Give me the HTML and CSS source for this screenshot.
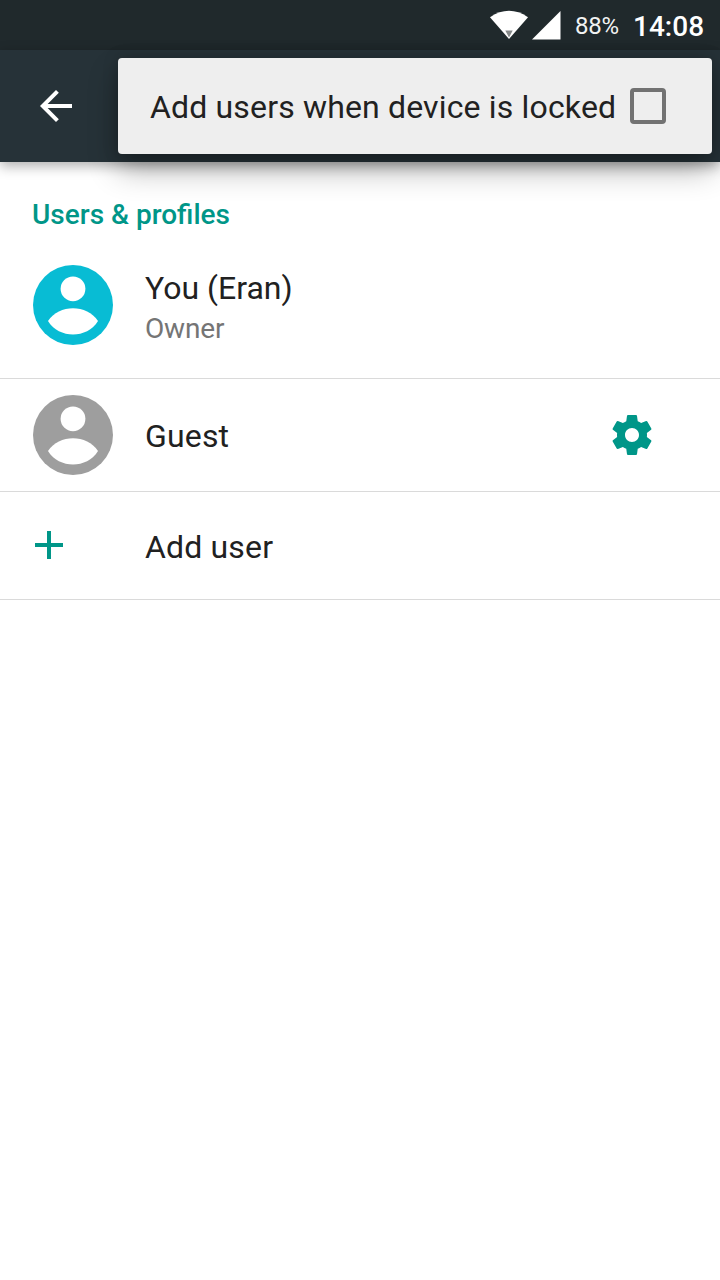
FILE: index.html
```html
<!DOCTYPE html>
<html lang="en">
<head>
<meta charset="utf-8">
<title>Users</title>
<link rel="stylesheet" href="styles.css">
</head>
<body>
<div class="screen">
  <header class="status-bar">
    <svg class="wifi" width="40" height="30" viewBox="0 0 40 30"><path fill="#fff" d="M0 7.200Q19-5.500 38 7.200L19 29Z"/><path fill="#858889" d="M15.300 20.500h7.400L19 27.500Z"/></svg>
    <svg class="signal" width="29" height="29" viewBox="0 0 29 29"><path fill="#fff" d="M0 28.500L28.500 0V28.500Z"/></svg>
    <span class="battery">88%</span>
    <span class="clock">14:08</span>
  </header>
  <div class="toolbar">
    <svg class="back" width="48" height="48" viewBox="0 0 24 24"><path fill="#fff" d="M20 11H7.830l5.590-5.590L12 4l-8 8 8 8 1.410-1.410L7.830 13H20v-2z"/></svg>
    <label class="popup-menu"><span class="popup-text">Add users when device is locked</span><span class="checkbox"></span></label>
  </div>
  <main>
    <h2 class="section-title"><span>Users &amp; profiles</span></h2>
    <div class="row row-owner">
      <svg class="avatar avatar-owner" viewBox="0 0 80 80"><circle cx="40" cy="40" r="40"/><circle class="cutout" cx="40" cy="23.800" r="12.400"/><path class="cutout" d="M15 56C26 39 54 39 65 56C54 74 26 74 15 56Z"/></svg>
      <div class="labels"><span class="name you">You (Eran)</span><span class="summary">Owner</span></div>
    </div>
    <div class="row row-guest">
      <svg class="avatar avatar-guest" viewBox="0 0 80 80"><circle cx="40" cy="40" r="40"/><circle class="cutout" cx="40" cy="23.800" r="12.400"/><path class="cutout" d="M15 56C26 39 54 39 65 56C54 74 26 74 15 56Z"/></svg>
      <span class="name guest">Guest</span>
      <svg class="gear" width="48" height="48" viewBox="0 0 24 24"><path d="M19.430 12.980c.04-.32.07-.64.07-.98s-.03-.66-.07-.98l2.110-1.650c.19-.15.24-.42.12-.64l-2-3.460c-.12-.22-.39-.3-.61-.22l-2.490 1c-.52-.4-1.080-.73-1.690-.98l-.38-2.650C14.460 2.180 14.250 2 14 2h-4c-.25 0-.46.18-.49.42l-.38 2.650c-.61.25-1.170.59-1.690.98l-2.490-1c-.23-.09-.49 0-.61.22l-2 3.460c-.13.22-.07.49.12.64l2.110 1.650c-.04.32-.07.65-.07.98s.03.66.07.98l-2.110 1.650c-.19.15-.24.42-.12.64l2 3.460c.12.22.39.3.61.22l2.490-1c.52.4 1.080.73 1.690.98l.38 2.650c.03.24.24.42.49.42h4c.25 0 .46-.18.49-.42l.38-2.650c.61-.25 1.170-.59 1.690-.98l2.490 1c.23.09.49 0 .61-.22l2-3.460c.12-.22.07-.49-.12-.64l-2.110-1.650zM12 15.500c-1.930 0-3.500-1.570-3.500-3.500s1.570-3.500 3.500-3.500 3.500 1.570 3.500 3.500-1.570 3.500-3.500 3.500z"/></svg>
    </div>
    <div class="row row-add">
      <svg class="plus" width="28" height="28" viewBox="0 0 28 28"><path d="M12 0h4v12h12v4H16v12h-4V16H0v-4h12z"/></svg>
      <span class="name add">Add user</span>
    </div>
  </main>
</div>
</body>
</html>
```
FILE: styles.css
```css
* { box-sizing: border-box; }
body { margin: 0; background: #fff; font-family: Roboto, "Liberation Sans", sans-serif; }
svg { display: block; flex: none; }
.screen { width: 720px; height: 1280px; overflow: hidden; background: #fff; }
.status-bar { height: 50px; background: #20292c; color: #fff; display: flex; align-items: flex-start; padding-left: 490px; white-space: nowrap; }
.wifi { margin-top: 10px; }
.signal { margin: 11px 0 0 2px; }
.battery { margin: 11px 0 0 14px; width: 58px; font-size: 24px; line-height: 30px; letter-spacing: -.3px; color: #f2f3f3; }
.clock { margin-top: 10px; font-size: 28px; line-height: 34px; font-weight: 500; }
.toolbar { position: relative; height: 112px; background: #263238; display: flex; justify-content: space-between; align-items: flex-start; padding: 8px 8px 0 32px; box-shadow: 0 4px 12px rgba(0,0,0,.32); }
.back { margin-top: 24px; }
.popup-menu { width: 594px; height: 96px; padding-left: 32px; border-radius: 4px; background: #eee; display: flex; align-items: center; box-shadow: 0 16px 30px rgba(0,0,0,.3), 0 0 16px rgba(0,0,0,.2); }
.popup-text { width: 480px; font-size: 32px; line-height: 40px; letter-spacing: .16px; color: #212121; white-space: nowrap; padding-top: 2px; }
.checkbox { width: 36px; height: 36px; border: 4px solid #727272; border-radius: 4px; }
.section-title { margin: 0; height: 87px; padding: 36px 0 0 32px; font-size: 28px; line-height: 34px; font-weight: 500; color: #009688; }
.row { display: flex; align-items: center; padding-left: 33px; border-bottom: 1px solid #dadada; }
.row-owner { height: 130px; align-items: flex-start; padding-top: 16px; }
.row-guest { height: 113px; padding-right: 64px; }
.row-add { height: 108px; padding-left: 35px; }
.avatar { width: 80px; height: 80px; margin-right: 32px; }
.avatar-owner { fill: #08bcd4; }
.avatar-guest { fill: #9e9e9e; }
.cutout { fill: #fff; }
.labels { display: flex; flex-direction: column; padding-top: 3px; }
.name { font-size: 32px; line-height: 40px; color: #212121; }
.summary { font-size: 28px; line-height: 34px; letter-spacing: -.15px; color: #757575; margin-top: 4px; }
.guest { flex: 1; padding-top: 2px; letter-spacing: .16px; }
.gear, .plus { fill: #009688; }
.plus { margin: 0 82px 2px 0; }
.add { padding-top: 2px; letter-spacing: .16px; }
```
